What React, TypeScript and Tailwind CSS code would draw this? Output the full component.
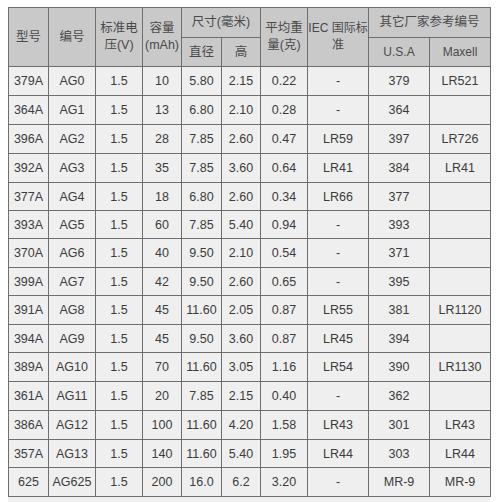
import React from "react";

const rows: string[][] = [
  ["379A", "AG0", "1.5", "10", "5.80", "2.15", "0.22", "-", "379", "LR521"],
  ["364A", "AG1", "1.5", "13", "6.80", "2.10", "0.28", "-", "364", ""],
  ["396A", "AG2", "1.5", "28", "7.85", "2.60", "0.47", "LR59", "397", "LR726"],
  ["392A", "AG3", "1.5", "35", "7.85", "3.60", "0.64", "LR41", "384", "LR41"],
  ["377A", "AG4", "1.5", "18", "6.80", "2.60", "0.34", "LR66", "377", ""],
  ["393A", "AG5", "1.5", "60", "7.85", "5.40", "0.94", "-", "393", ""],
  ["370A", "AG6", "1.5", "40", "9.50", "2.10", "0.54", "-", "371", ""],
  ["399A", "AG7", "1.5", "42", "9.50", "2.60", "0.65", "-", "395", ""],
  ["391A", "AG8", "1.5", "45", "11.60", "2.05", "0.87", "LR55", "381", "LR1120"],
  ["394A", "AG9", "1.5", "45", "9.50", "3.60", "0.87", "LR45", "394", ""],
  ["389A", "AG10", "1.5", "70", "11.60", "3.05", "1.16", "LR54", "390", "LR1130"],
  ["361A", "AG11", "1.5", "20", "7.85", "2.15", "0.40", "-", "362", ""],
  ["386A", "AG12", "1.5", "100", "11.60", "4.20", "1.58", "LR43", "301", "LR43"],
  ["357A", "AG13", "1.5", "140", "11.60", "5.40", "1.95", "LR44", "303", "LR44"],
  ["625", "AG625", "1.5", "200", "16.0", "6.2", "3.20", "-", "MR-9", "MR-9"],
];

const heights = [29, 29, 29, 29, 28, 28, 29, 28, 29, 28, 29, 29, 29, 28, 29];
const widths = [40, 47, 47, 39, 40, 39, 47, 61, 61, 61];

const th =
  "border border-[#6e6e6e] bg-[#c9c9c9] text-center align-middle font-normal text-[12.5px] leading-[17px] text-[#4a4a4a] p-0 whitespace-nowrap";
const td =
  "border border-[#6e6e6e] bg-[#efefef] text-center align-middle text-[12.5px] leading-[16px] text-[#3c3c3c] p-0";

export default function App() {
  return (
    <div
      className="w-[500px] h-[502px] bg-white pt-[7px] pl-[8px]"
      style={{ fontFamily: '"Liberation Sans", Arial, "Noto Sans CJK SC", sans-serif' }}
    >
      <div className="w-[482px] bg-[#efefef] pb-[8px]">
        <table className="table-fixed border-collapse w-[482px] border border-[#8a8a8a]">
          <colgroup>
            {widths.map((w, i) => (
              <col key={i} style={{ width: w }} />
            ))}
          </colgroup>
          <thead>
            <tr className="h-[30px]">
              <th rowSpan={2} className={th}>型号</th>
              <th rowSpan={2} className={th}>编号</th>
              <th rowSpan={2} className={th}>标准电<br />压(V)</th>
              <th rowSpan={2} className={th}>容量<br />(mAh)</th>
              <th colSpan={2} className={th}>尺寸(毫米)</th>
              <th rowSpan={2} className={th}>平均重<br />量(克)</th>
              <th rowSpan={2} className={th + " text-[12px]"}>IEC 国际标<br />准</th>
              <th colSpan={2} className={th}>其它厂家参考编号</th>
            </tr>
            <tr className="h-[29px]">
              <th className={th}>直径</th>
              <th className={th}>高</th>
              <th className={th + " text-[12px]"}>U.S.A</th>
              <th className={th + " text-[12px]"}>Maxell</th>
            </tr>
          </thead>
          <tbody>
            {rows.map((r, i) => (
              <tr key={i} style={{ height: heights[i] }}>
                {r.map((c, j) => (
                  <td key={j} className={td}>{c}</td>
                ))}
              </tr>
            ))}
          </tbody>
        </table>
      </div>
    </div>
  );
}
